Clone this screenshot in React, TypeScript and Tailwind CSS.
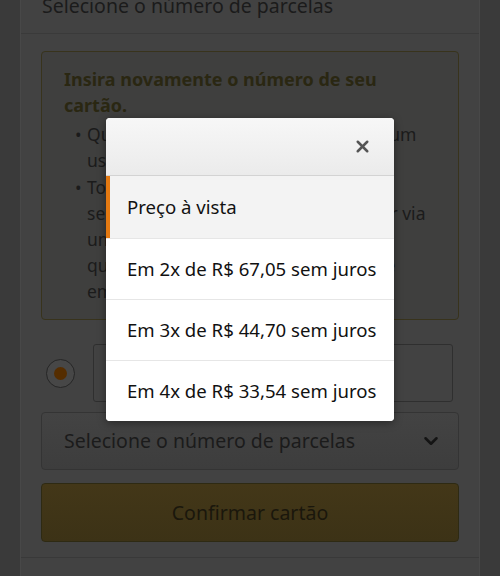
import { X, ChevronDown } from 'lucide-react'

const options = [
    'Preço à vista',
    'Em 2x de R$ 67,05 sem juros',
    'Em 3x de R$ 44,70 sem juros',
    'Em 4x de R$ 33,54 sem juros',
]

function InstallmentModal() {
    return (
        <div className="absolute left-[106px] top-[118px] w-[288px] rounded-[4px] bg-white overflow-hidden shadow-[0_2px_8px_rgba(0,0,0,0.4)]">
            <div className="h-[58px] flex items-center justify-end pr-[22px] bg-gradient-to-b from-[#f7f7f7] to-[#ebebeb] border-b border-[#d3d3d3]">
                <X className="w-[19px] h-[19px] text-[#555555]" strokeWidth={3.2} />
            </div>
            {options.map((label, i) => (
                <div
                    key={label}
                    className={`relative flex items-center pl-[21px] text-[18.6px] text-[#111111] ${
                        i === 0 ? 'h-[62px] bg-[#f3f3f3]' : 'h-[61px] bg-white border-t border-[#e6e6e6]'
                    }`}
                >
                    {i === 0 && <div className="absolute left-0 top-0 bottom-0 w-[4px] bg-[#e47911]" />}
                    {label}
                </div>
            ))}
        </div>
    )
}

export default function App() {
    return (
        <div
            className="relative w-[500px] h-[576px] overflow-hidden bg-[#3a3a3a]"
            style={{ fontFamily: '"Noto Sans", "Open Sans", sans-serif' }}
        >
            <div className="mx-[20px] h-full bg-[#424242] border-x border-[#484848] text-[#1b1b1b]">
                {/* previous row, cut off at top */}
                <div className="h-[34px] border-b border-[#3a3a3a] px-[21px] flex items-end">
                    <span className="text-[19.5px] leading-[26px] -mb-[2px] translate-y-[-16px]">Selecione o número de parcelas</span>
                </div>

                <div className="px-[20px] pt-[17px]">
                    {/* alert */}
                    <div className="h-[269px] rounded-[4px] border border-[#38331c] bg-[#3f3f3e] pl-[22px] pr-[14px] pt-[14px]">
                        <p className="text-[18px] leading-[26px] font-bold text-[#2a2712]">
                            Insira novamente o número de seu
                            <br />
                            cartão.
                        </p>
                        <ul className="mt-[3px] text-[17.5px] leading-[26px] text-[#1b1b1b] whitespace-nowrap">
                            <li className="flex gap-[6px]">
                                <span className="w-[6px] ml-[11px]">•</span>
                                <span>
                                    Quando adicionar um cartão, use só um
                                    <br />
                                    usuário válido.
                                </span>
                            </li>
                            <li className="flex gap-[6px] mt-[1px]">
                                <span className="w-[6px] ml-[11px]">•</span>
                                <span>
                                    Todos os cartões são verificados
                                    <br />
                                    seu banco emissor, que poderá enviar via
                                    <br />
                                    uma cobrança temporária
                                    <br />
                                    que será cancelada automaticamente
                                    <br />
                                    em alguns dias.
                                </span>
                            </li>
                        </ul>
                    </div>

                    {/* card row */}
                    <div className="mt-[24px] flex items-center gap-[18px]">
                        <div className="ml-[5px] w-[29px] h-[29px] rounded-full border border-[#262626] bg-[#474747] flex items-center justify-center">
                            <div className="w-[13px] h-[13px] rounded-full bg-[#552d00]" />
                        </div>
                        <div className="w-[360px] h-[58px] rounded-[3px] border border-[#2f2f2f] bg-[#424242]" />
                    </div>

                    {/* select */}
                    <div className="mt-[10px] h-[58px] rounded-[4px] border border-[#343434] bg-gradient-to-b from-[#434343] to-[#3d3d3d] flex items-center justify-between pl-[22px] pr-[16px]">
                        <span className="text-[19.5px]">Selecione o número de parcelas</span>
                        <ChevronDown className="w-[22px] h-[22px] text-[#141414]" strokeWidth={2.8} />
                    </div>

                    {/* confirm */}
                    <div className="mt-[13px] h-[59px] rounded-[4px] border border-[#2e2a13] bg-gradient-to-b from-[#433718] to-[#3c3216] flex items-center justify-center">
                        <span className="text-[19.5px] text-[#1a170c]">Confirmar cartão</span>
                    </div>
                </div>

                <div className="mt-[15px] border-t border-[#393939]" />
            </div>

            <InstallmentModal />
        </div>
    )
}
